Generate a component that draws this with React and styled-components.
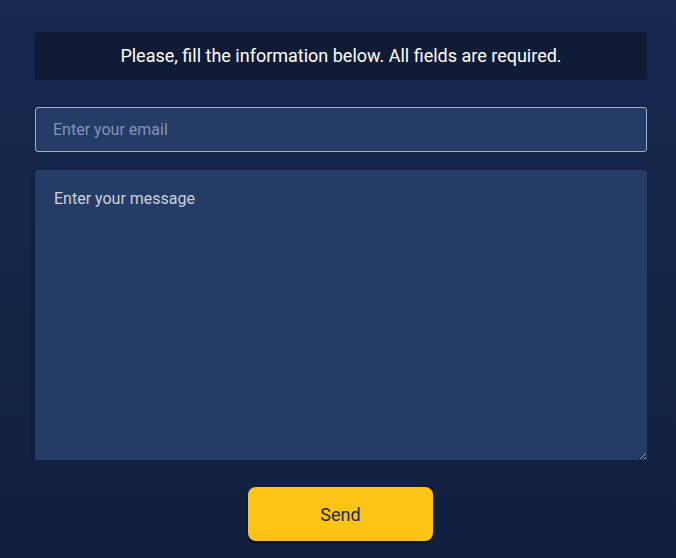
import React from 'react';
import styled, { createGlobalStyle } from 'styled-components';

const GlobalStyle = createGlobalStyle`
  html, body {
    margin: 0;
    padding: 0;
    background: #142446;
    font-family: Roboto, 'Liberation Sans', sans-serif;
  }
  * { box-sizing: border-box; }
`;

const Page = styled.div`
  min-height: 558px;
  background: linear-gradient(180deg, #162950 0%, #132344 60%, #11203f 100%);
  padding: 32px 29px 17px 35px;
`;

const Form = styled.form`
  display: flex;
  flex-direction: column;
  width: 612px;
`;

const Notice = styled.div`
  height: 48px;
  display: flex;
  align-items: center;
  justify-content: center;
  padding-bottom: 2px;
  background: #101c36;
  border-radius: 2px;
  color: #ffffff;
  font-size: 18px;
  margin-bottom: 27px;
`;

const fieldBase = `
  width: 100%;
  background: #243c66;
  color: #e6ebf3;
  font-family: Roboto, 'Liberation Sans', sans-serif;
  font-size: 16px;
  outline: none;
`;

const EmailInput = styled.input`
  ${fieldBase};
  height: 45px;
  border: 1px solid #a3afc4;
  border-radius: 3px;
  padding: 0 17px;
  margin-bottom: 18px;
  caret-color: #ffffff;

  &::placeholder {
    color: #8494b1;
  }
`;

const MessageInput = styled.textarea`
  ${fieldBase};
  height: 290px;
  border: none;
  border-radius: 3px 3px 0 0;
  padding: 19px 19px;
  resize: vertical;
  box-shadow: -2px 0 3px rgba(10, 20, 40, 0.35);
  margin-bottom: 27px;

  &::placeholder {
    color: #c9d1de;
  }
`;

const SendButton = styled.button`
  align-self: center;
  width: 185px;
  height: 54px;
  margin-left: -1px;
  border: none;
  border-radius: 8px;
  background: #fec413;
  color: #1f2a3c;
  font-family: Roboto, 'Liberation Sans', sans-serif;
  font-size: 18px;
  box-shadow: 0 2px 2px rgba(0, 0, 0, 0.45);
  cursor: pointer;
`;

export default function App() {
  return (
    <>
      <GlobalStyle />
      <Page>
        <Form onSubmit={(e) => e.preventDefault()}>
          <Notice>Please, fill the information below. All fields are required.</Notice>
          <EmailInput type="email" placeholder="Enter your email" />
          <MessageInput placeholder="Enter your message" />
          <SendButton type="submit">Send</SendButton>
        </Form>
      </Page>
    </>
  );
}
